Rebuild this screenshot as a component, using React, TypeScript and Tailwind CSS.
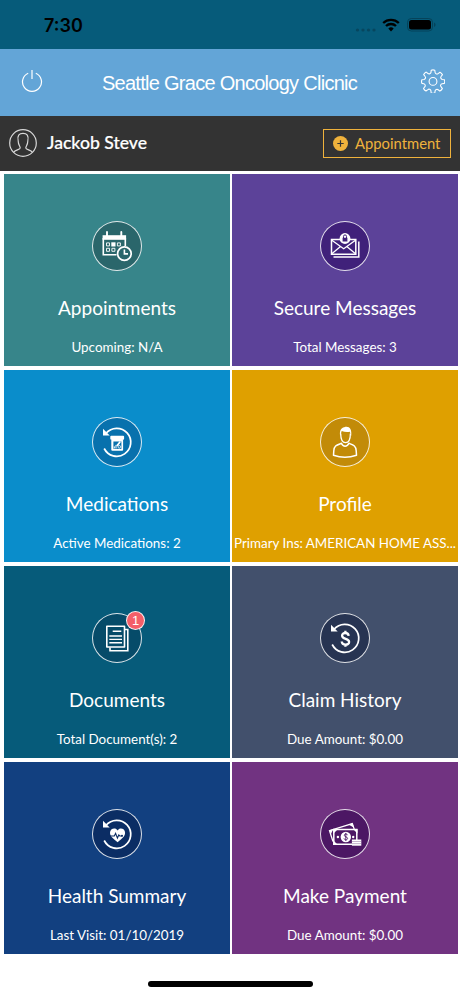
import { ReactNode } from 'react';

interface Tile {
  title: string;
  detail: string;
  color: string;
  disc: string;
  icon: ReactNode;
  badge?: number;
}

// Circular arrow shared by the history style icons
function HistoryArrow() {
  return (
    <>
      <path d="M13 15.3A14 14 0 1 1 11.2 30.5" fill="none" stroke="white" strokeWidth="1.7" />
      <path d="M10 10.8v6.7h6.7z" fill="white" />
    </>
  );
}

function CalendarIcon() {
  return (
    <>
      <path d="M10.3 16v16.7h13.2M32.3 16v8" fill="none" stroke="white" strokeWidth="1.6" />
      <path d="M9.6 13.2h23.5v4.6H9.6z" fill="white" />
      <path d="M14 10v5.5M28.3 10v5.5" stroke="white" strokeWidth="1.9" strokeLinecap="round" />
      <path d="M13.5 20.9h3v3h-3zM24.4 20.9h3v3h-3zM13.5 26.3h3v3h-3zM18.9 26.3h3v3h-3z" fill="none" stroke="white" strokeWidth="0.9" />
      <path d="M18.3 20.3h4.2v4.2h-4.2z" fill="white" />
      <circle cx="31.4" cy="31.6" r="6.8" fill="#2a666b" stroke="white" strokeWidth="1.7" />
      <path d="M31.4 27.5v4.4H35" fill="none" stroke="white" strokeWidth="1.6" />
    </>
  );
}

function MessagesIcon() {
  return (
    <>
      <path d="M12.5 35h25.3V19.5" fill="none" stroke="white" strokeWidth="1.5" />
      <path d="M10.5 17.5h24.3v14.7H10.5z" fill="none" stroke="white" strokeWidth="1.5" />
      <path d="M10.5 18l12.2 8.8L34.8 18M10.5 32l9-7.5M34.8 32l-9-7.5" fill="none" stroke="white" strokeWidth="1.3" />
      <circle cx="24" cy="16.5" r="5.4" fill="white" />
      <path d="M22.5 16v-1.6a1.5 1.5 0 0 1 3 0V16" fill="none" stroke="#40217a" strokeWidth="1" />
      <path d="M21.6 15.8h4.8v3.6h-4.8z" fill="#40217a" />
    </>
  );
}

function MedicationsIcon() {
  return (
    <>
      <HistoryArrow />
      <rect x="17.3" y="17.8" width="13.8" height="3.9" rx="1" fill="white" />
      <rect x="18.3" y="21" width="11.8" height="11.7" rx="1" fill="white" />
      <rect x="20.4" y="23.5" width="8" height="7.4" fill="#0871ad" />
      <path d="M21.3 30.4v-2M23 30.4v-3.5" stroke="white" strokeWidth="1" />
      <path d="M24.4 27.2l2.4-3" stroke="white" strokeWidth="1.8" strokeLinecap="round" />
      <circle cx="26.3" cy="28.8" r="1.3" fill="none" stroke="white" strokeWidth="0.8" />
    </>
  );
}

function PersonIcon() {
  return (
    <>
      <path d="M19.7 15.5c0 6 2 9.1 4.9 9.1s4.8-3.1 4.8-9.1" fill="none" stroke="white" strokeWidth="1.3" />
      <path d="M19.2 18c-1-5 .7-8.3 4-8.8 4.5-1.7 8 1.2 7 8.8l-1.4-4.2c-3 .4-5.9.1-8.1-.7z" fill="white" />
      <path
        d="M20.4 25.3c-4.8 1.8-7.3 2.3-7.6 7.4l-.3 4.6c7.3 2.6 15.6 2.6 23 0l-.3-4.6c-.3-5-2.7-5.6-7.3-7.4-1.7 3.9-5.9 3.9-7.5 0z"
        fill="none"
        stroke="white"
        strokeWidth="1.5"
        strokeLinejoin="round"
      />
    </>
  );
}

function DocumentsIcon() {
  return (
    <>
      <path d="M17 33.5v3.3h17.8V15.5H32" fill="none" stroke="white" strokeWidth="1.6" />
      <path d="M13.8 12.2h17.7V33H13.8z" fill="none" stroke="white" strokeWidth="1.6" strokeLinejoin="round" />
      <path d="M19.7 17.2h8.6M16.3 22h12.7M16.3 25.4h12.7M16.3 28.7h12.7" stroke="white" strokeWidth="1.4" />
    </>
  );
}

function ClaimIcon() {
  return (
    <>
      <HistoryArrow />
      <path
        d="M27.7 21.8c-.4-3.8-6.6-3.7-6.6-.1 0 4 7 2.4 7 6.2 0 3.7-7 3.9-7.4-.4M24.4 16.8v2.7M24.4 30v2.8"
        fill="none"
        stroke="white"
        strokeWidth="2.3"
      />
    </>
  );
}

function HealthIcon() {
  return (
    <>
      <HistoryArrow />
      <path d="M24.6 32.3c-5-4.1-7.6-6.2-7.6-9.5 0-4.7 5.9-5.7 7.6-2.3 1.7-3.4 7.5-2.4 7.5 2.3 0 3.3-2.5 5.4-7.5 9.5z" fill="white" />
      <path d="M16.8 26h4.5l1.3-2.6 1.8 4.7 1.4-3.1 1 1h2.6" fill="none" stroke="#0b2d64" strokeWidth="1.1" />
      <circle cx="29" cy="25.8" r="1" fill="#0b2d64" />
    </>
  );
}

function PaymentIcon() {
  return (
    <>
      <path d="M12 31.5L8.5 20.6l22.8-7 2.1 6" fill="none" stroke="white" strokeWidth="1.3" />
      <path d="M8.3 20.3l4-1.2-2.4 5.2zM27.3 14.5l4.3-1.3 1.3 4.2z" fill="white" />
      <path d="M12.8 19.6h23v14.6h-23z" fill="#4c1764" stroke="white" strokeWidth="1.5" />
      <path d="M12.5 19H17l-4.5 4.5zM36.5 19H32l4.5 4.5zM12.5 35v-4.5L17 35z" fill="white" />
      <circle cx="24.8" cy="27" r="5.2" fill="white" />
      <circle cx="16.9" cy="27" r="1.2" fill="white" />
      <circle cx="32.2" cy="27" r="1.2" fill="white" />
      <path d="M26.5 25.2c-.3-1.8-3.2-1.7-3.2.1 0 1.9 3.3 1.2 3.3 3.1 0 1.9-3.3 2-3.6 0M24.8 22.9v8" fill="none" stroke="#4c1764" strokeWidth="0.9" />
      <path d="M30.9 29.5h9.4v6.2h-9.4z" fill="white" />
      <path d="M30.9 31.5h9.4M30.9 33.6h9.4" stroke="#8d6b9c" strokeWidth="0.5" />
    </>
  );
}

const tiles: Tile[] = [
  { title: 'Appointments', detail: 'Upcoming: N/A', color: 'bg-[#37858a]', disc: 'bg-[#2a666b]', icon: <CalendarIcon /> },
  { title: 'Secure Messages', detail: 'Total Messages: 3', color: 'bg-[#5c4299]', disc: 'bg-[#40217a]', icon: <MessagesIcon /> },
  { title: 'Medications', detail: 'Active Medications: 2', color: 'bg-[#0a8dcb]', disc: 'bg-[#0871ad]', icon: <MedicationsIcon /> },
  { title: 'Profile', detail: 'Primary Ins: AMERICAN HOME ASS...', color: 'bg-[#dfa000]', disc: 'bg-[#c28b08]', icon: <PersonIcon /> },
  { title: 'Documents', detail: 'Total Document(s): 2', color: 'bg-[#065b7a]', disc: 'bg-[#064b69]', icon: <DocumentsIcon />, badge: 1 },
  { title: 'Claim History', detail: 'Due Amount: $0.00', color: 'bg-[#42506c]', disc: 'bg-[#273452]', icon: <ClaimIcon /> },
  { title: 'Health Summary', detail: 'Last Visit: 01/10/2019', color: 'bg-[#124080]', disc: 'bg-[#0b2d64]', icon: <HealthIcon /> },
  { title: 'Make Payment', detail: 'Due Amount: $0.00', color: 'bg-[#713381]', disc: 'bg-[#4c1764]', icon: <PaymentIcon /> },
];

function DashboardTile({ tile }: { tile: Tile }) {
  return (
    <button className={`flex h-full min-w-0 flex-col items-center pt-[47px] text-white ${tile.color}`}>
      <div className={`relative size-[50px] shrink-0 rounded-full border border-white/85 ${tile.disc}`}>
        <svg viewBox="0 0 48 48" className="size-12">
          {tile.icon}
        </svg>
        {tile.badge && (
          <span className="absolute -top-[3px] -right-[4px] flex size-[19px] items-center justify-center rounded-full border border-white/90 bg-[#f35f69] font-['Liberation_Sans'] text-[13px] leading-none">
            {tile.badge}
          </span>
        )}
      </div>
      <span className="mt-[23px] text-[19px] leading-[28px]">{tile.title}</span>
      <span className="mt-[15px] text-[13.4px] leading-[20px] whitespace-nowrap">{tile.detail}</span>
    </button>
  );
}

function StatusBar() {
  return (
    <div className="flex h-[49px] items-center justify-between bg-[#065b7a] pr-6 pl-[44px] text-black">
      <span className="mt-[2px] font-['Inter'] text-[18px] font-semibold">7:30</span>
      <div className="mt-[1px] flex items-center">
        <svg width="22" height="6" className="mt-[9px] mr-[5px]" fill="#07465e">
          <circle cx="2.5" cy="3" r="1.6" />
          <circle cx="8" cy="3" r="1.6" />
          <circle cx="13.5" cy="3" r="1.6" />
          <circle cx="19" cy="3" r="1.6" />
        </svg>
        <svg width="18" height="14" viewBox="0 0 18 14">
          <path d="M1.2 5a11.3 11.3 0 0 1 15.6 0M4 8a7.2 7.2 0 0 1 10 0" fill="none" stroke="black" strokeWidth="2.3" />
          <path d="M9 13.4l-2.7-2.9a4 4 0 0 1 5.4 0z" fill="black" />
        </svg>
        <svg width="29" height="14" viewBox="0 0 29 14" className="ml-[7px]">
          <rect x=".5" y=".5" width="25" height="12.5" rx="3.8" fill="none" stroke="#05435a" />
          <rect x="2" y="2" width="22" height="9.5" rx="2.5" fill="black" />
          <path d="M27 4.5c2 .8 2 3.7 0 4.5z" fill="#05435a" />
        </svg>
      </div>
    </div>
  );
}

function Header() {
  return (
    <header className="flex h-[67px] items-center justify-between bg-[#63a5d7] pr-[15px] pl-[21px] text-white">
      <button aria-label="Log out" className="pb-[3px]">
        <svg width="22" height="24" viewBox="0 0 22 24" fill="none" stroke="white" strokeWidth="1.2">
          <path d="M7.2 4.2a9.5 9.5 0 1 0 7.6 0M11 1v9" />
        </svg>
      </button>
      <h1 className="mr-[5px] font-['Liberation_Sans'] text-[20px] tracking-[-0.72px]">Seattle Grace Oncology Clicnic</h1>
      <button aria-label="Settings" className="pb-[3px]">
        <svg width="24" height="24" viewBox="0 0 24 24" fill="none" stroke="white" strokeWidth="1.1" strokeLinejoin="round">
          <path d="M10.2 1.2q1.8-.7 3.6 0l.3 2.3q.2 1 1.2 1.4t1.8-.3l1.9-1.4q1.7.8 2.5 2.5l-1.4 1.8q-.6.8-.2 1.8t1.4 1.2l2.1.3q.7 1.8 0 3.6l-2.3.3q-1 .2-1.4 1.2t.3 1.8l1.4 1.9q-.8 1.7-2.5 2.5l-1.8-1.4q-.8-.6-1.8-.2t-1.2 1.4l-.3 2.1q-1.8.7-3.6 0l-.3-2.3q-.2-1-1.2-1.4t-1.8.3L5 22q-1.7-.8-2.5-2.5l1.4-1.8q.6-.8.2-1.8t-1.4-1.2L.9 14.4q-.7-1.8 0-3.6l2.1-.3q1-.2 1.4-1.2t-.3-1.8L2.7 5.6q.8-1.7 2.5-2.5L7 4.5q.8.6 1.8.2t1.2-1.4z" />
          <circle cx="12" cy="12.4" r="3.9" />
        </svg>
      </button>
    </header>
  );
}

function UserBar() {
  return (
    <div className="flex h-[55px] items-center bg-[#333333] pr-[9px] pl-[9px]">
      <svg width="28" height="28" viewBox="0 0 28 28" fill="none" stroke="#d8d8d8" strokeWidth="1.2" className="-mt-[2px]">
        <circle cx="14" cy="14" r="13.3" />
        <path d="M4.8 23.2c1-2.4 6.4-2.4 6.4-4.3 0-1.6-2-2.7-2-6.8-1.3-5.8 1-7.8 4.8-7.8s6.1 2 4.8 7.8c0 4.1-2 5.2-2 6.8 0 1.9 5.4 1.9 6.4 4.3" />
      </svg>
      <span className="ml-[10px] text-[17.6px] font-medium text-white [-webkit-text-stroke:0.2px_white]">Jackob Steve</span>
      <button className="ml-auto flex h-[29px] w-[128px] items-center border border-[#efb23c] pl-[9px] text-[14.8px] text-[#efb23c]">
        <svg width="15" height="15" viewBox="0 0 15 15" className="mr-[7px]">
          <circle cx="7.5" cy="7.5" r="7.5" fill="#efb23c" />
          <path d="M7.5 4.3v6.4M4.3 7.5h6.4" stroke="#333333" strokeWidth="1.2" />
        </svg>
        Appointment
      </button>
    </div>
  );
}

export default function App() {
  return (
    <div className="flex h-[996px] w-[460px] flex-col overflow-hidden bg-white font-['Lato',sans-serif]">
      <StatusBar />
      <Header />
      <UserBar />
      <main className="grid h-[783px] grid-cols-2 grid-rows-4 gap-x-[2px] gap-y-1 pt-[3px] pr-[2px] pl-1">
        {tiles.map((tile) => (
          <DashboardTile key={tile.title} tile={tile} />
        ))}
      </main>
      <div className="mx-auto mt-[27px] h-[6px] w-[165px] rounded-full bg-black" />
    </div>
  );
}
